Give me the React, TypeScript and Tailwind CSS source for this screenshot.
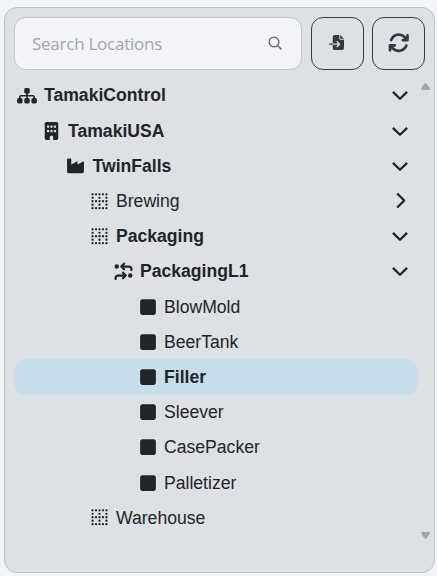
import type { ComponentType } from "react";
import {
  FaSitemap,
  FaBuilding,
  FaIndustry,
  FaBorderNone,
  FaArrowsTurnToDots,
  FaSquare,
  FaFileImport,
  FaArrowsRotate,
} from "react-icons/fa6";

type Node = {
  label: string;
  icon: ComponentType<{ className?: string }>;
  indent: string;
  iconBox: string;
  iconSize?: string;
  bold?: boolean;
  selected?: boolean;
  arrow?: "down" | "right";
};

const L0 = "pl-[3px]";
const L1 = "pl-[29.5px]";
const L2 = "pl-[52px]";
const L3 = "pl-[77px]";
const L4 = "pl-[100px]";
const L5 = "pl-[126px]";

const nodes: Node[] = [
  { label: "TamakiControl", icon: FaSitemap, indent: L0, iconBox: "w-[27px]", iconSize: "w-[20px] h-[17.6px]", bold: true, arrow: "down" },
  { label: "TamakiUSA", icon: FaBuilding, indent: L1, iconBox: "w-[24.5px]", iconSize: "w-[15px] h-[18px]", bold: true, arrow: "down" },
  { label: "TwinFalls", icon: FaIndustry, indent: L2, iconBox: "w-[26.5px]", iconSize: "w-[19px] h-[17.6px]", bold: true, arrow: "down" },
  { label: "Brewing", icon: FaBorderNone, indent: L3, iconBox: "w-[25px]", iconSize: "w-[17px] h-[18.5px]", arrow: "right" },
  { label: "Packaging", icon: FaBorderNone, indent: L3, iconBox: "w-[25px]", iconSize: "w-[17px] h-[18.5px]", bold: true, arrow: "down" },
  { label: "PackagingL1", icon: FaArrowsTurnToDots, indent: L4, iconBox: "w-[26px]", iconSize: "w-[19px] h-[18px]", bold: true, arrow: "down" },
  { label: "BlowMold", icon: FaSquare, indent: L5, iconBox: "w-[24px]" },
  { label: "BeerTank", icon: FaSquare, indent: L5, iconBox: "w-[24px]" },
  { label: "Filler", icon: FaSquare, indent: L5, iconBox: "w-[24px]", bold: true, selected: true },
  { label: "Sleever", icon: FaSquare, indent: L5, iconBox: "w-[24px]" },
  { label: "CasePacker", icon: FaSquare, indent: L5, iconBox: "w-[24px]" },
  { label: "Palletizer", icon: FaSquare, indent: L5, iconBox: "w-[24px]" },
  { label: "Warehouse", icon: FaBorderNone, indent: L3, iconBox: "w-[25px]", iconSize: "w-[17px] h-[18.5px]" },
];

function Chevron({ dir }: { dir: "down" | "right" }) {
  return (
    <svg viewBox="0 0 18 18" className="h-[18px] w-[18px]" fill="none" stroke="#212529" strokeWidth="2.3" strokeLinejoin="round">
      <path d={dir === "down" ? "M1.9 5.9 9 12.8 16.1 5.9" : "M6.2 1.5 13.2 8.5 6.2 15.5"} />
    </svg>
  );
}

function Row({ node }: { node: Node }) {
  const Icon = node.icon;
  return (
    <div className={`flex h-[35.2px] w-[404px] shrink-0 items-center rounded-xl pr-[9px] ${node.indent} ${node.selected ? "bg-[#c7dde9]" : ""}`}>
      <span className={`flex shrink-0 items-center ${node.iconBox}`}>
        <Icon className={node.iconSize ?? "h-[18px] w-[16px]"} />
      </span>
      <span className={`flex-1 text-[17.6px] leading-[26px] ${node.bold ? "font-bold" : ""}`}>{node.label}</span>
      {node.arrow && <Chevron dir={node.arrow} />}
    </div>
  );
}

export default function App() {
  return (
    <div className="flex h-[576px] w-[437px] bg-[#f2f4f8] pl-1 pt-[7px] font-['Liberation_Sans',Arial,sans-serif] text-[#212529]">
      <div className="flex h-[566px] w-[431px] flex-col rounded-[13px] border border-[#bcc3ca] bg-[#dde0e4] pl-[9px] pt-[9px]">
        <div className="flex h-[53px] shrink-0">
          <div className="flex w-[288px] items-center justify-between rounded-xl border border-[#c3c6cb] bg-[#f2f4f8] pl-[17px] pr-[19px]">
            <span className="font-['Open_Sans',sans-serif] text-[17px] tracking-[-0.25px] text-[#9fa5af]">Search Locations</span>
            <svg viewBox="0 0 14 14" className="mb-[2px] h-[14px] w-[14px]" fill="none" stroke="#6c737b" strokeWidth="1.6" strokeLinecap="round">
              <circle cx="6" cy="6" r="4.8" />
              <path d="m9.5 9.5 3.4 3.4" />
            </svg>
          </div>
          <button className="ml-[9px] flex w-[53px] items-center justify-center rounded-xl border border-[#343a40] pb-[2px] pr-[2px] text-[#343a40]">
            <FaFileImport className="h-[15px] w-[15px]" />
          </button>
          <button className="ml-2 flex w-[53px] items-center justify-center rounded-xl border border-[#343a40] pb-[2px] text-[#343a40]">
            <FaArrowsRotate className="h-[21.5px] w-[21.5px]" />
          </button>
        </div>
        <div className="mt-[7.9px] flex">
          <div className="flex w-[407px] flex-col">
            {nodes.map((n) => (
              <Row key={n.label} node={n} />
            ))}
          </div>
          <div className="flex h-[461px] w-[9px] flex-col justify-between pt-[5px]">
            <svg viewBox="0 0 9 7" className="h-[7px] w-[9px]" fill="#a1a4a8">
              <path d="M3.4.7Q4.5-.6 5.6.7L8.7 5Q9.3 7 7.7 7H1.3Q-.3 7 .3 5Z" />
            </svg>
            <svg viewBox="0 0 9 7" className="h-[7px] w-[9px]" fill="#a1a4a8">
              <path d="M3.4 6.3Q4.5 7.6 5.6 6.3L8.7 2Q9.3 0 7.7 0H1.3Q-.3 0 .3 2Z" />
            </svg>
          </div>
        </div>
      </div>
    </div>
  );
}
